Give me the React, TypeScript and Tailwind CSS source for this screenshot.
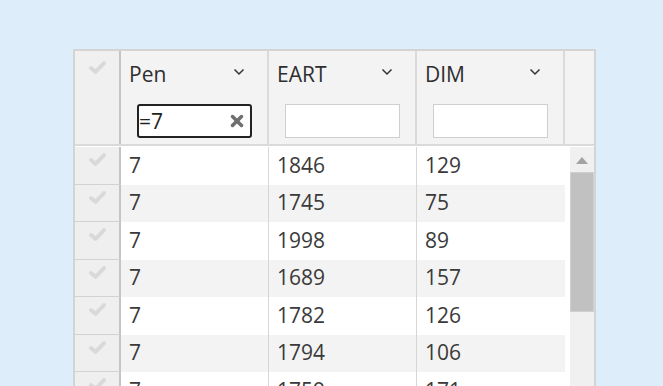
import React from "react";

const rows = [
  ["7", "1846", "129"],
  ["7", "1745", "75"],
  ["7", "1998", "89"],
  ["7", "1689", "157"],
  ["7", "1782", "126"],
  ["7", "1794", "106"],
  ["7", "1759", "171"],
];

function Check() {
  return (
    <svg width="19" height="15" viewBox="0 0 19 15" className="block">
      <polyline points="3,8 7.5,11.8 16,3.2" fill="none" stroke="#d9d9d9" strokeWidth="4" strokeLinecap="round" strokeLinejoin="round" />
    </svg>
  );
}

function Chevron() {
  return (
    <svg width="12" height="8" viewBox="0 0 12 8" className="block">
      <polyline points="1.5,1.5 6,6 10.5,1.5" fill="none" stroke="#333" strokeWidth="1.5" />
    </svg>
  );
}

function HeaderCell({ title, value }: { title: string; value?: string }) {
  return (
    <div className="w-[148px] shrink-0 border-r-2 border-[#dadada] bg-[#f3f3f3] flex flex-col">
      <div className="flex items-center justify-between pl-[8px] pr-[22px] pt-[10px] h-[36px]">
        <span className="text-[21px] leading-[26px] text-[#2e2e2e]">{title}</span>
        <div className="-mt-[4px]">
          <Chevron />
        </div>
      </div>
      <div className="pl-[16px] pt-[17px]">
        {value !== undefined ? (
          <div className="w-[115px] h-[34px] border-2 border-[#222] rounded-[3px] bg-white flex items-center justify-between pr-[6px]">
            <span className="text-[21px] text-[#222] leading-none">{value}</span>
            <svg width="14" height="14" viewBox="0 0 14 14" className="block">
              <line x1="2.5" y1="2.5" x2="11.5" y2="11.5" stroke="#6f6f6f" strokeWidth="3.5" strokeLinecap="round" />
              <line x1="11.5" y1="2.5" x2="2.5" y2="11.5" stroke="#6f6f6f" strokeWidth="3.5" strokeLinecap="round" />
            </svg>
          </div>
        ) : (
          <div className="w-[115px] h-[34px] border border-[#cfcfcf] bg-white" />
        )}
      </div>
    </div>
  );
}

export default function App() {
  return (
    <div className="h-[386px] w-[663px] overflow-hidden bg-[#deedfa] font-['Open_Sans',sans-serif]">
      <div className="ml-[73px] mt-[49px] w-[523px] border-2 border-[#d4d4d4] bg-white">
        <div className="flex h-[95px] border-b-2 border-[#dadada]">
          <div className="w-[46px] shrink-0 bg-[#f0f0f0] border-r-2 border-[#c4c4c4] flex justify-center pt-[9px]">
            <Check />
          </div>
          <HeaderCell title="Pen" value="=7" />
          <HeaderCell title="EART" />
          <HeaderCell title="DIM" />
          <div className="flex-1 bg-[#f3f3f3]" />
        </div>
        <div className="flex pt-[1px]">
          <div className="flex flex-col w-[490px]">
            {rows.map((r, i) => (
              <div key={i} className={`flex h-[37.5px] ${i % 2 === 1 ? "bg-[#f3f3f3]" : "bg-white"}`}>
                <div className="w-[46px] shrink-0 bg-[#efefef] border-r-2 border-b border-r-[#c4c4c4] border-b-[#d2d2d2] flex justify-center pt-[5px]">
                  <Check />
                </div>
                {r.map((c, j) => (
                  <div
                    key={j}
                    className={`${j < 2 ? "w-[148px] border-r-[1.5px] border-[#d6d6d6]" : "flex-1"} shrink-0 flex items-center pl-[8px] pb-[1px] text-[21px] text-[#3a3a3a]`}
                  >
                    {c}
                  </div>
                ))}
              </div>
            ))}
          </div>
          <div className="flex-1 bg-white pl-[5px]">
            <div className="h-full bg-[#f0f0f0] flex flex-col items-center">
              <div className="h-[25px] flex items-center justify-center pt-[1px]">
                <div className="w-0 h-0 border-l-[6px] border-r-[6px] border-b-[7px] border-l-transparent border-r-transparent border-b-[#a3a3a3]" />
              </div>
              <div className="w-full h-[140px] bg-[#c1c1c1] border border-[#cfcfcf]" />
            </div>
          </div>
        </div>
      </div>
    </div>
  );
}
